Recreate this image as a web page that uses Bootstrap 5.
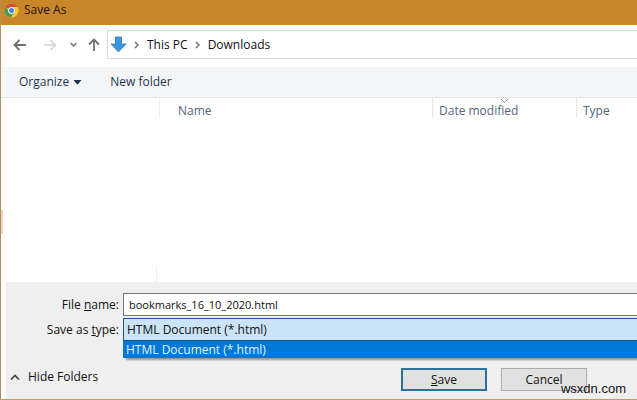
<!DOCTYPE html>
<html lang="en">
<head>
<meta charset="utf-8">
<meta name="viewport" content="width=device-width, initial-scale=1">
<title>Save As</title>
<link href="https://cdn.jsdelivr.net/npm/bootstrap@5.3.0/dist/css/bootstrap.min.css" rel="stylesheet">
<style>
  body { font-family: "Open Sans", "Noto Sans", sans-serif; font-size: 12px; line-height: 16px; color: #111; background: #fff; }
  .dialog { border-left: 1px solid #b3905a; border-bottom: 1px solid #c99a5c; overflow: hidden; }
  .titlebar { background: #c98729; height: 25px; margin-left: -1px; padding-left: 4px; gap: 5px; padding-bottom: 5px; color: #1d1508; }
  .titlebar h1 { font-size: 12px; line-height: 16px; }
  .navrow { padding: 5px 0 8px 12px; }
  .navrow button, .toolbar button { background: none; border: 0; padding: 0; color: inherit; }
  .arrows { width: 94px; }
  .arrows button { margin-right: 16px; }
  .arrows .recent { margin-left: -3px; margin-right: 11px; }
  .address { border: 1px solid #d9d9d9; border-right: 0; height: 29px; padding-left: 2px; }
  .address a { color: #111; text-decoration: none; margin-left: 8px; }
  .address .sep { margin-left: 7px; }
  .toolbar { background: #f4f5f7; border-bottom: 1px solid #e2e5e9; height: 31px; padding-left: 18px; gap: 28px; color: #1f3550; }
  .headers { color: #55657c; height: 20px; margin-left: 158px; }
  .headers th { font-weight: 400; padding: 5px 0 0 6px; height: 20px; position: relative; border-left: 1px solid #dfe6ee; line-height: 15px; }
  .headers th:first-child { border-left-color: #eef1f4; padding-left: 18px; width: 273px; }
  .headers th:nth-child(2) { width: 144px; }
  .sortmark { position: absolute; top: 0; left: 50%; margin-left: -5px; }
  .files { padding-top: 92px; }
  .edge { width: 2px; height: 24px; background: #ecd3c0; }
  .splitter { width: 1px; height: 16px; background: #f1f1f1; margin-left: 155px; }
  .bottom { background: #efefef; margin-left: 5px; padding-top: 11px; padding-bottom: 8px; }
  .field + .field { margin-top: 2px; }
  .field label { width: 117px; padding-right: 4px; text-align: right; flex: none; padding-top: 1px; }
  .field .form-control, .field .form-select { font-size: 12px; line-height: 16px; height: 23px; border-radius: 0; border-right: 0; color: #111; padding: 0 5px; box-shadow: none; }
  .field .form-control { border-color: #777; font-size: 11px; }
  .field .form-select { border-color: #17548c; background: #cce4f7; padding-left: 3px; }
  .options { top: 22px; left: 0; right: 0; background: #0078d7; color: #e4f3ff; border-top: 1px solid #17548c; height: 18px; line-height: 17px; padding: 0 3px; box-shadow: 3px 2px 2px #8d969e; }
  .actions { padding: 27px 50px 0 4px; gap: 14px; }
  .actions button { font-size: 12px; line-height: 16px; height: 23px; width: 86px; border-radius: 0; padding: 0; color: #111; background: #e1e1e1; border: 1px solid #adadad; }
  .actions .main-action { border: 2px solid #2d7399; }
  .actions .fold { background: none; border: 0; width: auto; height: 18px; gap: 8px; }
  .watermark { right: 11px; bottom: 1px; font-family: "Liberation Sans", Arial, sans-serif; font-size: 13px; line-height: 18px; }
</style>
<script src="https://cdn.jsdelivr.net/npm/bootstrap@5.3.0/dist/js/bootstrap.bundle.min.js"></script>
</head>
<body>
<main class="dialog min-vh-100 d-flex flex-column position-relative">
  <header class="titlebar d-flex align-items-center">
    <svg width="15" height="15" viewBox="0 0 48 48" aria-hidden="true">
      <circle cx="24" cy="24" r="22" fill="#f4c92f"/>
      <path d="M24 24 5 13A22 22 0 0 1 43 13Z" fill="#dc4937"/>
      <path d="M24 24H14L5 13A22 22 0 0 0 23 46L33 29Z" fill="#3f9b55"/>
      <path d="M24 13H43A22 22 0 0 1 23 46L33 29Z" fill="#f4c92f"/>
      <circle cx="24" cy="24" r="11" fill="#f5f2ee"/>
      <circle cx="24" cy="24" r="8" fill="#4a86d8"/>
    </svg>
    <h1 class="m-0 fw-normal">Save As</h1>
  </header>

  <nav class="navrow d-flex align-items-center" aria-label="Location">
    <div class="arrows d-flex align-items-center flex-shrink-0">
      <button type="button" class="d-flex" aria-label="Back"><svg width="14" height="12" viewBox="0 0 14 12" fill="none" stroke="#707070" stroke-width="1.8"><path d="M13 6H2M6.500 1 1.500 6l5 5"/></svg></button>
      <button type="button" class="d-flex" aria-label="Forward"><svg width="14" height="12" viewBox="0 0 14 12" fill="none" stroke="#d4d4d4" stroke-width="1.6"><path d="M1 6h11M7.500 1l5 5-5 5"/></svg></button>
      <button type="button" class="recent d-flex" aria-label="Recent locations"><svg width="7" height="6" viewBox="0 0 7 6" fill="none" stroke="#808080" stroke-width="1.7"><path d="M.7 1 3.500 4 6.300 1"/></svg></button>
      <button type="button" class="d-flex me-0" aria-label="Up"><svg width="12" height="13" viewBox="0 0 12 13" fill="none" stroke="#707070" stroke-width="1.8"><path d="M6 13V2M1 6.500l5-5 5 5"/></svg></button>
    </div>
    <div class="address d-flex align-items-center flex-grow-1">
      <svg width="17" height="17" viewBox="0 0 17 17" aria-hidden="true"><path d="M5.500 1h6v7H16l-7.500 8L1 8h4.500Z" fill="#3d96dc" stroke="#3179b5" stroke-width=".8"/></svg>
      <svg class="sep" width="5" height="8" viewBox="0 0 5 8" fill="none" stroke="#707070" stroke-width="1.5"><path d="m1 1 3 3-3 3"/></svg>
      <a href="#">This PC</a>
      <svg class="sep" width="5" height="8" viewBox="0 0 5 8" fill="none" stroke="#707070" stroke-width="1.5"><path d="m1 1 3 3-3 3"/></svg>
      <a href="#">Downloads</a>
    </div>
  </nav>

  <div class="toolbar d-flex align-items-center">
    <button type="button" class="d-flex align-items-center">Organize<svg class="ms-1" width="9" height="5" viewBox="0 0 9 5"><path d="M.5 0h8l-4 4.800Z" fill="#1f3550"/></svg></button>
    <button type="button">New folder</button>
  </div>

  <section class="flex-grow-1 d-flex flex-column" aria-label="Files">
    <table class="headers">
      <thead><tr>
        <th scope="col">Name</th>
        <th scope="col">Date modified<svg class="sortmark" width="9" height="6" viewBox="0 0 9 6" fill="none" stroke="#8c939b"><path d="m1 1 3.500 3.500L8 1"/></svg></th>
        <th scope="col">Type</th>
      </tr></thead>
    </table>
    <div class="files flex-grow-1 d-flex flex-column justify-content-between">
      <div class="edge"></div>
      <div class="splitter"></div>
    </div>
  </section>

  <form class="bottom">
    <div class="field d-flex align-items-center">
      <label for="fname">File <u>n</u>ame:</label>
      <input id="fname" class="form-control" type="text" value="bookmarks_16_10_2020.html">
    </div>
    <div class="field d-flex align-items-center">
      <label for="ftype">Save as <u>t</u>ype:</label>
      <div class="position-relative flex-grow-1">
        <select id="ftype" class="form-select"><option>HTML Document (*.html)</option></select>
        <div class="options position-absolute" role="listbox" aria-label="File types"><div role="option" aria-selected="true">HTML Document (*.html)</div></div>
      </div>
    </div>
    <div class="actions d-flex align-items-start">
      <button type="button" class="fold d-flex align-items-center me-auto"><svg width="10" height="7" viewBox="0 0 10 7" fill="none" stroke="#444" stroke-width="1.700"><path d="m1 5.500 4-4 4 4"/></svg>Hide Folders</button>
      <button type="submit" class="main-action"><u>S</u>ave</button>
      <button type="button">Cancel</button>
    </div>
  </form>
  <div class="watermark position-absolute">wsxdn.com</div>
</main>
</body>
</html>
